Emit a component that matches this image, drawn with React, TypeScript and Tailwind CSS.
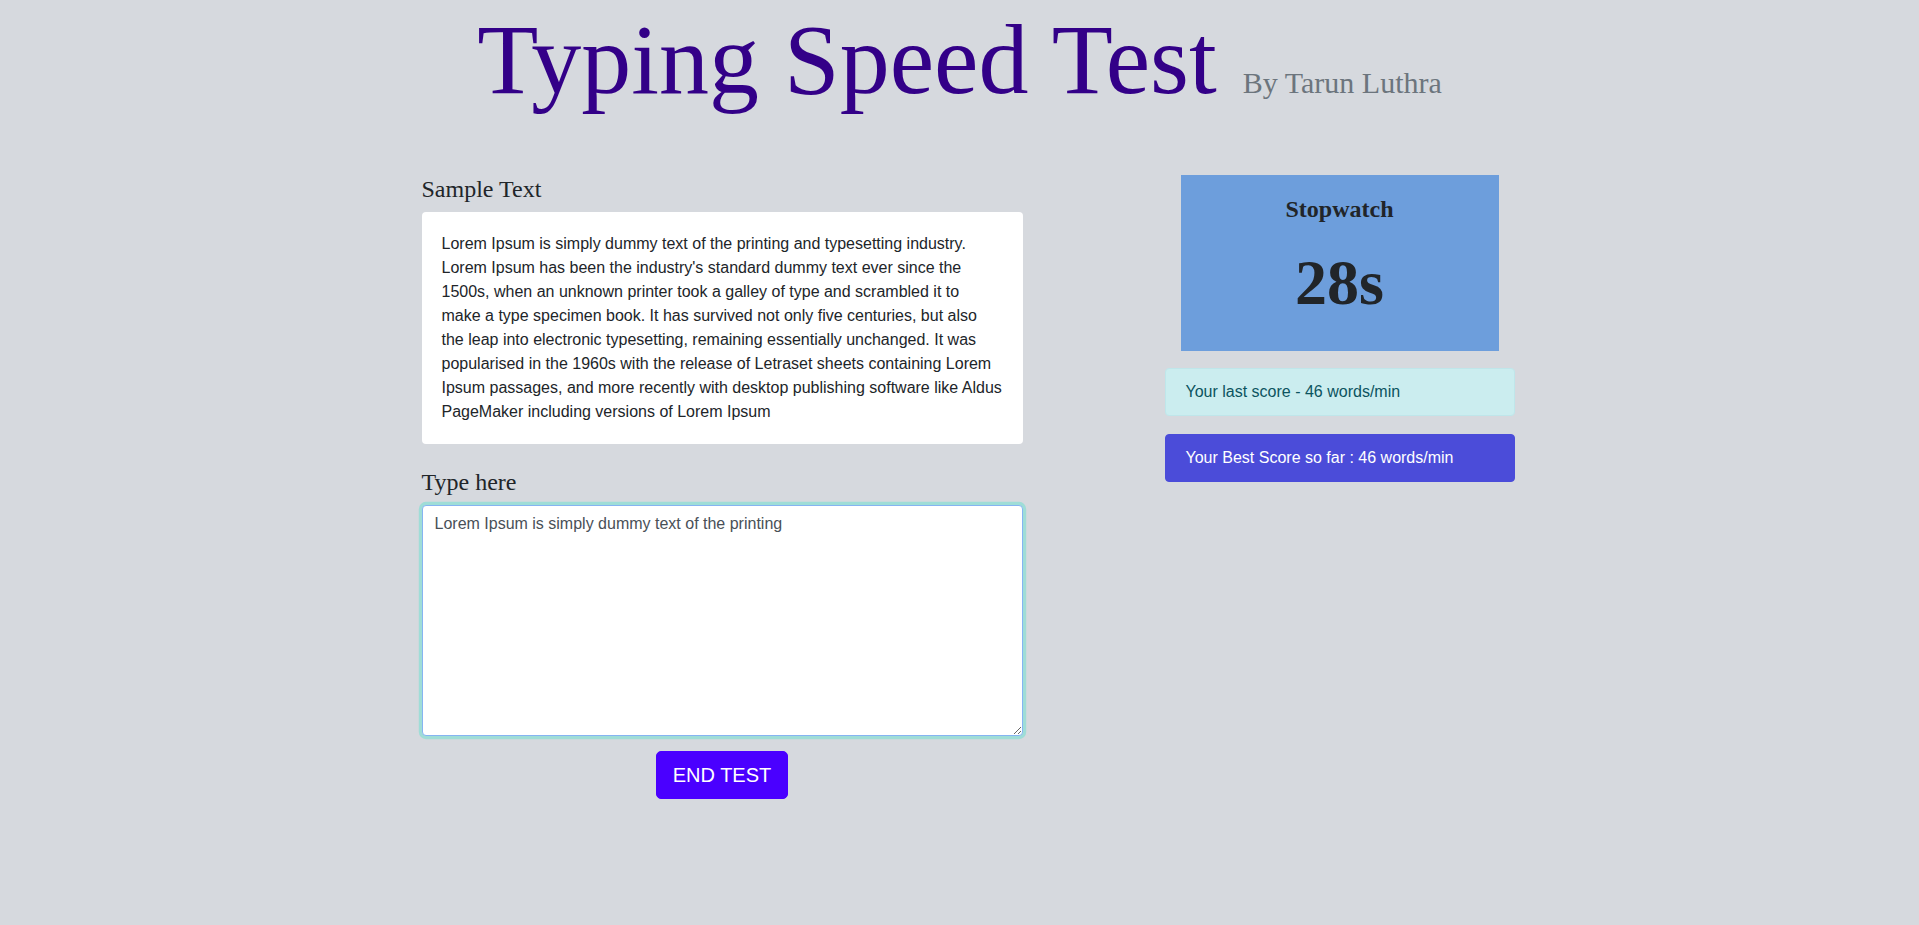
import React from "react";

const sample =
  "Lorem Ipsum is simply dummy text of the printing and typesetting industry. Lorem Ipsum has been the industry's standard dummy text ever since the 1500s, when an unknown printer took a galley of type and scrambled it to make a type specimen book. It has survived not only five centuries, but also the leap into electronic typesetting, remaining essentially unchanged. It was popularised in the 1960s with the release of Letraset sheets containing Lorem Ipsum passages, and more recently with desktop publishing software like Aldus PageMaker including versions of Lorem Ipsum";

export default function App() {
  return (
    <div
      className="min-h-[925px] w-full bg-[#d6d9de] text-[#212529]"
      style={{ fontFamily: '"Liberation Sans", Arial, sans-serif' }}
    >
      <div className="flex items-baseline justify-center font-['Liberation_Serif',serif]">
        <h1 className="m-0 text-[100px] font-normal leading-[1.2] text-[#330088]">
          Typing Speed Test
        </h1>
        <span className="ml-[26px] text-[30px] leading-[1.2] text-[#6c757d]">
          By Tarun Luthra
        </span>
      </div>

      <div className="mx-auto mt-[55px] flex w-[1140px]">
        <div className="w-[760px] pl-[32px]">
          <div className="w-[601px]">
            <h4 className="mb-[8px] font-['Liberation_Serif',serif] text-[24px] leading-[1.2] font-normal">
              Sample Text
            </h4>
            <div className="rounded-[4px] bg-white p-5 text-[16px] leading-[24px] text-[#212529]">
              {sample}
            </div>
            <h4 className="mt-[24px] mb-[8px] font-['Liberation_Serif',serif] text-[24px] leading-[1.2] font-normal">
              Type here
            </h4>
            <textarea
              className="block h-[231px] w-full resize-y rounded-[4px] border border-[#86b4f2] bg-white px-[12px] py-[6px] text-[16px] leading-[24px] text-[#495057] shadow-[0_0_0_3.2px_#9fddd7] outline-none"
              style={{ fontFamily: '"Liberation Sans", Arial, sans-serif' }}
              defaultValue="Lorem Ipsum is simply dummy text of the printing"
            />
            <div className="mt-[15px] flex justify-center">
              <button className="h-[48px] rounded-[5px] border border-[#4a00ff] bg-[#4a00ff] px-[16px] text-[20px] leading-[30px] text-white">
                END TEST
              </button>
            </div>
          </div>
        </div>

        <div className="w-[380px] px-[15px]">
          <div className="mx-4 h-[176px] bg-[#6d9edc] pt-[20px] text-center font-['Liberation_Serif',serif] text-[#212529]">
            <div className="text-[24px] leading-[1.2] font-bold">Stopwatch</div>
            <div className="mt-[21px] text-[64px] leading-[1.2] font-bold">28s</div>
          </div>
          <div className="mt-[17px] rounded-[4px] border border-[#bfe6ea] bg-[#cbedef] px-[20px] py-[11px] text-[16px] leading-[24px] text-[#0c5460]">
            Your last score - 46 words/min
          </div>
          <div className="mt-[18px] rounded-[4px] border border-[#4a4cd9] bg-[#4b4cd9] px-[20px] py-[11px] text-[16px] leading-[24px] text-white">
            Your Best Score so far : 46 words/min
          </div>
        </div>
      </div>
    </div>
  );
}
